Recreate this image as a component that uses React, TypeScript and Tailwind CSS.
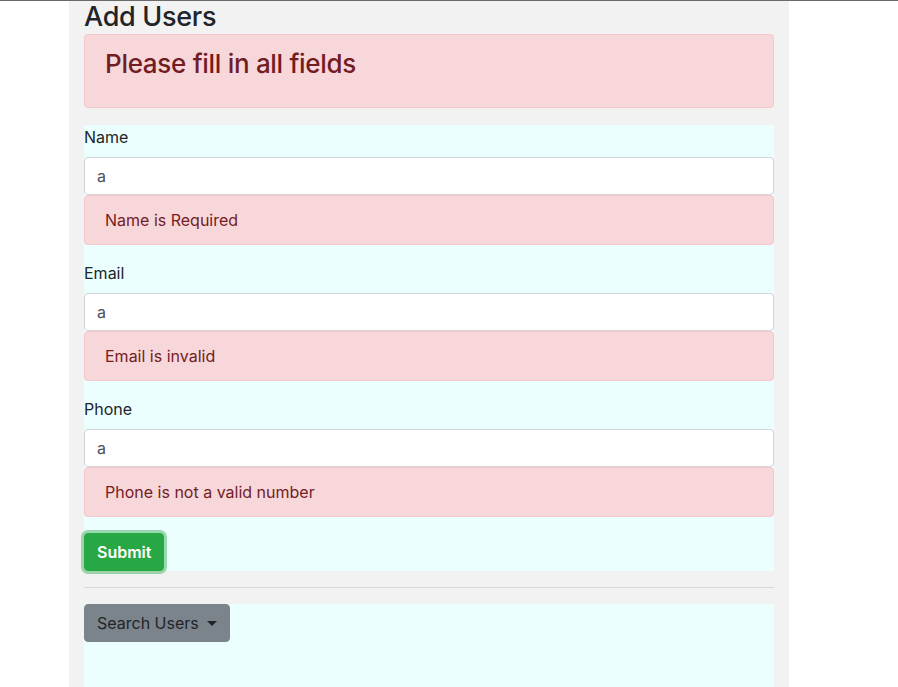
import { ReactNode } from 'react';

interface FieldProps {
  label: string;
  value: string;
  error: string;
}

function Field({ label, value, error }: FieldProps) {
  return (
    <div className="mb-4">
      <label className="block mb-2 text-base leading-6 text-[#212529]">{label}</label>
      <input
        readOnly
        value={value}
        className="block w-full h-[38px] px-3 py-1.5 text-base text-[#495057] bg-white border border-[#ced4da] rounded-[4px] outline-none"
      />
      <div className="px-5 py-3 text-base leading-6 text-[#721c24] bg-[#f8d7da] border border-[#f5c6cb] rounded-[4px]">
        {error}
      </div>
    </div>
  );
}

function Section({ children }: { children: ReactNode }) {
  return <div className="bg-[#ebffff]">{children}</div>;
}

export default function App() {
  return (
    <div className="min-h-screen bg-white border-t border-[#6a6a6a] font-['Inter','Liberation_Sans',Arial,sans-serif]">
      <div className="ml-[69px] w-[720px] min-h-[686px] bg-[#f2f2f2] px-[15px]">
        <h2 className="m-0 h-[33px] text-[27px] leading-[32px] font-medium tracking-[-0.3px] text-[#212529]">Add Users</h2>

        <div className="h-[74px] px-5 pt-3 bg-[#f8d7da] border border-[#f5c6cb] rounded-[4px]">
          <h3 className="text-[26px] leading-[33px] font-medium tracking-[-0.3px] text-[#721c24]">Please fill in all fields</h3>
        </div>

        <div className="mt-[17px]">
          <Section>
            <Field label="Name" value="a" error="Name is Required" />
            <Field label="Email" value="a" error="Email is invalid" />
            <Field label="Phone" value="a" error="Phone is not a valid number" />
            <button className="h-[38px] px-3 text-base font-semibold text-white bg-[#28a745] border border-[#28a745] rounded-[4px] shadow-[0_0_0_3px_rgba(72,180,97,0.5)]">
              Submit
            </button>
          </Section>
        </div>

        <hr className="my-4 border-0 border-t border-[#d9d9d9]" />

        <Section>
          <div className="h-[90px]">
            <button className="h-[38px] px-3 inline-flex items-center gap-2 text-base text-[#212529] bg-[#7b848b] border border-[#7b848b] rounded-[4px]">
              Search Users
              <span className="w-0 h-0 border-l-[5px] border-r-[5px] border-t-[5px] border-l-transparent border-r-transparent border-t-[#212529]" />
            </button>
          </div>
        </Section>
      </div>
    </div>
  );
}
